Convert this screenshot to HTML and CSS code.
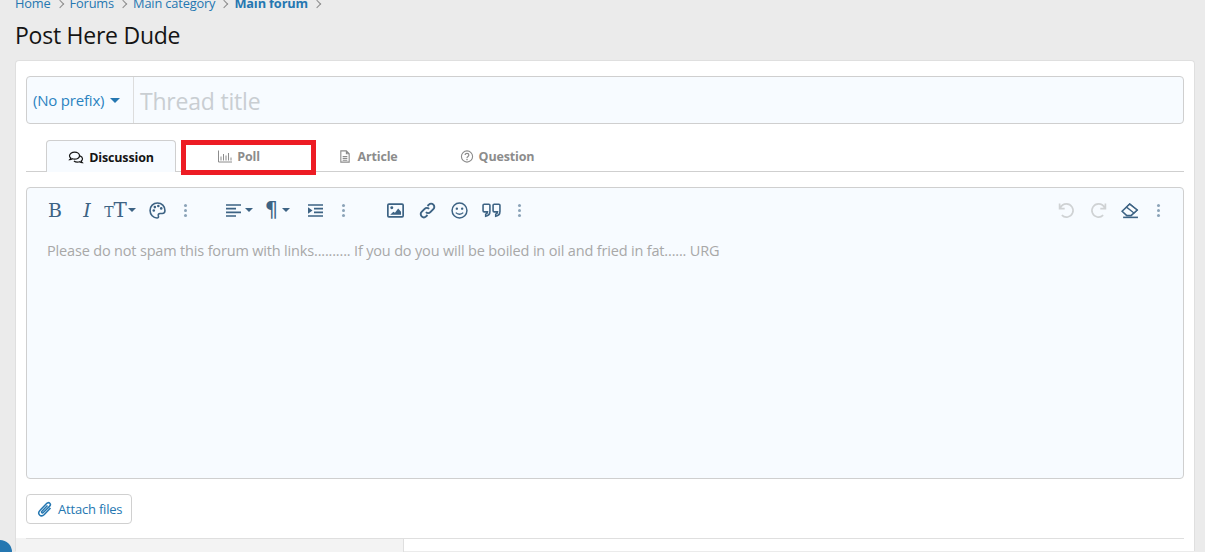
FILE: index.html
```html
<!DOCTYPE html>
<html lang="en">
<head>
    <meta charset="UTF-8">
    <meta name="viewport" content="width=device-width, initial-scale=1.0">
    <title>Post Here Dude</title>
    <link rel="stylesheet" href="styles.css">
</head>
<body>
    <ul class="crumbs">
        <li><a href="#">Home</a></li>
        <li><a href="#">Forums</a></li>
        <li><a href="#">Main category</a></li>
        <li><a href="#" class="current">Main forum</a></li>
    </ul>

    <h1>Post Here Dude</h1>

    <div class="card">
        <div class="title-row">
            <div class="prefix">(No prefix) <span class="caret caret-blue"></span></div>
            <div class="title-input">Thread title</div>
        </div>

        <div class="tabs">
            <div class="tab active">
                <svg class="tab-icon" viewBox="0 0 16 14"><g fill="none" stroke="currentColor" stroke-width="1.3"><path d="M6.500 1.200c-3 0-5.500 1.700-5.500 3.900 0 1 .5 1.800 1.300 2.500-.2.800-.7 1.400-1.100 1.800 1 0 2-.4 2.800-1 .8.300 1.600.4 2.500.4 3 0 5.300-1.700 5.300-3.800S9.500 1.200 6.500 1.200z"/><path d="M12.400 5.200c1.500.6 2.600 1.700 2.600 3.100 0 1-.5 1.800-1.300 2.500.2.800.7 1.400 1.100 1.800-1 0-2-.4-2.800-1-.8.300-1.600.4-2.500.4-1.500 0-2.800-.5-3.700-1.300"/></g></svg>
                Discussion
            </div>
            <div class="tab">
                <svg class="tab-icon" viewBox="0 0 14 12"><path d="M.5 0v11.500H14M3 6v4M5.500 3.500V10M8 5v5M10.500 2.500V10M13 7v3" fill="none" stroke="currentColor"/></svg>
                Poll
            </div>
            <div class="tab">
                <svg class="tab-icon" viewBox="0 0 11 14"><path d="M1 1h6l3 3v9H1zM7 1v3h3M3 7h5M3 9h5M3 11h5" fill="none" stroke="currentColor" stroke-width="1.200"/></svg>
                Article
            </div>
            <div class="tab">
                <svg class="tab-icon" viewBox="0 0 14 14"><circle cx="7" cy="7" r="6" fill="none" stroke="currentColor" stroke-width="1.200"/><path d="M5 5.500c0-2.500 4-2.500 4 0C9 7 7 6.800 7 8.500" fill="none" stroke="currentColor" stroke-width="1.300"/><rect x="6.300" y="9.500" width="1.400" height="1.500" fill="currentColor"/></svg>
                Question
            </div>
            <div class="poll-mark"></div>
        </div>

        <div class="editor">
            <div class="toolbar">
                <div class="tool-group">
                    <span class="tool tool-letter">B</span>
                    <span class="tool tool-letter tool-italic">I</span>
                    <span class="tool tool-size"><small>T</small>T<span class="caret"></span></span>
                    <span class="tool">
                        <svg class="icon" viewBox="0 0 16 16"><path d="M8 1C4 1 1 4 1 8c0 3.800 3 7 6.500 7 1.300 0 1.700-1 1.300-2-.4-1.100.2-2.200 1.500-2.200h2.200c1.500 0 2.500-1 2.500-2.800C15 4 12 1 8 1z" fill="none" stroke="currentColor" stroke-width="1.500"/><circle cx="4.500" cy="8" r="1.200" fill="currentColor"/><circle cx="5.500" cy="4.800" r="1.200" fill="currentColor"/><circle cx="8.800" cy="3.800" r="1.200" fill="currentColor"/><circle cx="11.500" cy="6" r="1.200" fill="currentColor"/></svg>
                    </span>
                    <span class="tool tool-dots"></span>
                </div>
                <div class="tool-group">
                    <span class="tool tool-wide">
                        <svg class="icon icon-lines" viewBox="0 0 15 14"><path d="M0 1.500h15M0 5.200h10M0 8.800h15M0 12.500h10" fill="none" stroke="currentColor" stroke-width="1.700"/></svg>
                        <span class="caret"></span>
                    </span>
                    <span class="tool tool-para">¶<span class="caret"></span></span>
                    <span class="tool">
                        <svg class="icon icon-lines" viewBox="0 0 15 14"><path d="M0 1.500h15M6 5.200h9M6 8.800h9M0 12.500h15" fill="none" stroke="currentColor" stroke-width="1.700"/><path d="M0 3.800 4.500 7 0 10.200z" fill="currentColor"/></svg>
                    </span>
                    <span class="tool tool-dots"></span>
                </div>
                <div class="tool-group">
                    <span class="tool">
                        <svg class="icon" viewBox="0 0 16 14"><rect x=".8" y="1" width="14.400" height="12" rx="1" fill="none" stroke="currentColor" stroke-width="1.600"/><circle cx="4.500" cy="4.500" r="1.400" fill="currentColor"/><path d="M3 11 6 8.200l1.500 1L10.500 5l2.700 3.200V11z" fill="currentColor"/></svg>
                    </span>
                    <span class="tool">
                        <svg class="icon" viewBox="0 0 16 16"><path d="M6.500 9.500c1.300 1.300 3 1.200 4.200 0l2.800-2.800c1.200-1.200 1.200-3 0-4.200s-3-1.200-4.200 0L8 3.800M9.500 6.500c-1.300-1.300-3-1.200-4.200 0L2.500 9.300c-1.200 1.200-1.200 3 0 4.200s3 1.200 4.200 0L8 12.200" fill="none" stroke="currentColor" stroke-width="1.800"/></svg>
                    </span>
                    <span class="tool">
                        <svg class="icon" viewBox="0 0 16 16"><circle cx="8" cy="8" r="7" fill="none" stroke="currentColor" stroke-width="1.400"/><circle cx="5.500" cy="6.300" r="1.100" fill="currentColor"/><circle cx="10.500" cy="6.300" r="1.100" fill="currentColor"/><path d="M4.500 10c1.800 2 5.200 2 7 0" fill="none" stroke="currentColor" stroke-width="1.300"/></svg>
                    </span>
                    <span class="tool">
                        <svg class="icon icon-quote" viewBox="0 0 18 14"><path d="M2 1h4.500a1 1 0 0 1 1 1v6c0 2.500-1.500 4-4 4.500v-2c1-.2 1.600-.9 1.700-2.200H2a1 1 0 0 1-1-1V2a1 1 0 0 1 1-1zM11.500 1H16a1 1 0 0 1 1 1v6c0 2.500-1.500 4-4 4.500v-2c1-.2 1.600-.9 1.700-2.200h-3.200a1 1 0 0 1-1-1V2a1 1 0 0 1 1-1z" fill="none" stroke="currentColor" stroke-width="1.500"/></svg>
                    </span>
                    <span class="tool tool-dots"></span>
                </div>
                <div class="tool-group tool-group-end">
                    <span class="tool tool-off">
                        <svg class="icon" viewBox="0 0 16 16"><path d="M1.500 1.500v4.800h4.800M2 6c1-2.600 3.200-4.200 6-4.200A6.200 6.200 0 1 1 3.600 12.400" fill="none" stroke="currentColor" stroke-width="1.600"/></svg>
                    </span>
                    <span class="tool tool-off">
                        <svg class="icon" viewBox="0 0 16 16"><path d="M14.500 1.500v4.800H9.700M14 6c-1-2.600-3.200-4.200-6-4.200a6.200 6.200 0 1 0 4.400 10.600" fill="none" stroke="currentColor" stroke-width="1.600"/></svg>
                    </span>
                    <span class="tool">
                        <svg class="icon icon-eraser" viewBox="0 0 17 15"><path d="M1 8.200 8.200 1.500l7 5.500-5.700 5.300H5.500z" fill="none" stroke="currentColor" stroke-width="1.500"/><path d="M8.200 1.500l7 5.500-3 2.800-7-5.500z" fill="#ffffff"/><path d="M8.200 1.500l7 5.500-3 2.800-7-5.500z" fill="none" stroke="currentColor" stroke-width="1.300"/><path d="M2 14h14" stroke="currentColor" stroke-width="1.500"/></svg>
                    </span>
                    <span class="tool tool-dots"></span>
                </div>
            </div>
            <div class="editor-text">Please do not spam this forum with links.......... If you do you will be boiled in oil and fried in fat...... URG</div>
        </div>

        <button class="attach">
            <svg class="attach-icon" viewBox="0 0 16 18"><path d="M13.500 8 7.300 14.500c-1.500 1.500-3.500 1.700-4.700.5s-1-3.200.5-4.700l6.500-6.800c1-1 2.300-1.200 3.200-.3s.7 2.200-.3 3.200L6.300 12.500c-.5.500-1.100.6-1.500.2s-.3-1 .2-1.500L10.500 5.500" fill="none" stroke="currentColor" stroke-width="1.500"/></svg>
            Attach files
        </button>

        <div class="options">
            <div class="options-side"></div>
            <div class="options-main"></div>
        </div>
    </div>

    <div class="corner-badge"></div>
</body>
</html>
```

FILE: styles.css
```css
html, body {
    height: 552px;
    overflow: hidden;
}
body {
    position: relative;
    margin: 0;
    padding: 0 10px 0 15px;
    font-family: "Open Sans", "Noto Sans", sans-serif;
    font-size: 13px;
    color: #141414;
    background-color: #ebebeb;
}
a {
    color: #2577b1;
    text-decoration: none;
}
.crumbs {
    display: flex;
    list-style: none;
    margin: -6px 0 0;
    padding: 0;
    height: 18px;
    line-height: 18px;
    font-size: 12.800px;
    letter-spacing: -0.15px;
}
.crumbs li {
    display: flex;
    align-items: center;
}
.crumbs li::after {
    content: "";
    width: 5px;
    height: 5px;
    margin: 2px 7px 0 6px;
    border-top: 1px solid #8c8c8c;
    border-right: 1px solid #8c8c8c;
    transform: rotate(45deg);
}
.crumbs .current {
    font-weight: 700;
}
h1 {
    margin: 5px 0 0;
    height: 36px;
    line-height: 36px;
    font-size: 23px;
    font-weight: 400;
    letter-spacing: -0.25px;
}
.card {
    box-sizing: border-box;
    height: 491px;
    margin-top: 7px;
    padding: 15px 10px 0;
    background-color: white;
    border: 1px solid #dfdfdf;
    border-bottom: none;
    border-radius: 4px 4px 0 0;
}
.title-row {
    display: flex;
    height: 48px;
    box-sizing: border-box;
    background-color: #f7fbff;
    border: 1px solid #cfcfcf;
    border-radius: 4px;
}
.prefix {
    display: flex;
    align-items: center;
    gap: 3px;
    width: 107px;
    box-sizing: border-box;
    padding-left: 6px;
    color: #2b83c1;
    font-size: 15px;
    letter-spacing: -0.2px;
    border-right: 1px solid #dddddd;
}
.title-input {
    flex: 1;
    padding-left: 6px;
    line-height: 48px;
    font-size: 23px;
    letter-spacing: -0.2px;
    color: #c9ced2;
}
.caret {
    display: inline-block;
    width: 0;
    height: 0;
    border-left: 4px solid transparent;
    border-right: 4px solid transparent;
    border-top: 4px solid currentColor;
}
.caret-blue {
    margin-left: 3px;
    border-left-width: 5px;
    border-right-width: 5px;
    border-top-width: 5px;
    color: #2577b1;
}
.tabs {
    position: relative;
    display: flex;
    height: 31px;
    margin-top: 16px;
    padding-left: 20px;
    border-bottom: 1px solid #cfcfcf;
}
.tab {
    display: flex;
    align-items: center;
    justify-content: center;
    gap: 5px;
    width: 129px;
    box-sizing: border-box;
    padding: 2px 3px 0 0;
    font-size: 12.500px;
    font-weight: 700;
    letter-spacing: -0.15px;
    color: #8c8c8c;
}
.tab.active {
    width: 130px;
    height: 32px;
    padding-right: 0;
    color: #141414;
    background-color: #f7fbff;
    border: 1px solid #cfcfcf;
    border-bottom: none;
    border-radius: 4px 4px 0 0;
}
.tab-icon {
    width: 14px;
    height: 13px;
}
.tab.active .tab-icon {
    width: 16px;
}
.poll-mark {
    position: absolute;
    left: 155px;
    top: 0;
    width: 135px;
    height: 35px;
    box-sizing: border-box;
    border: 5px solid #ed1c24;
}
.editor {
    box-sizing: border-box;
    height: 292px;
    margin-top: 15px;
    padding: 7px 13px 0 12px;
    background-color: #f7fbff;
    border: 1px solid #cfcfcf;
    border-radius: 4px;
}
.toolbar {
    display: flex;
    height: 30px;
    color: #3d6384;
}
.tool-group {
    display: flex;
    align-items: center;
    margin-right: 24px;
}
.tool-group-end {
    margin-left: auto;
    margin-right: 0;
}
.tool {
    display: flex;
    align-items: center;
    justify-content: center;
    gap: 4px;
    width: 32px;
    height: 30px;
}
.tool-letter {
    font-family: "DejaVu Serif", serif;
    font-size: 19px;
}
.tool-italic {
    font-style: italic;
}
.tool-size {
    gap: 0;
    width: 38px;
    padding-right: 4px;
    box-sizing: border-box;
    font-family: "DejaVu Serif", serif;
    font-size: 20px;
}
.tool-size small {
    margin-top: 4px;
    font-size: 14px;
}
.tool-size .caret {
    margin-left: 1px;
}
.tool-wide {
    width: 34px;
    margin-left: 1px;
}
.tool-para {
    width: 43px;
    font-family: "DejaVu Sans", sans-serif;
    font-size: 21px;
}
.tool-dots {
    width: 24px;
}
.tool-dots::before {
    content: "";
    width: 3px;
    height: 3px;
    border-radius: 50%;
    background-color: #8ba3b8;
    box-shadow: 0 -5px 0 #8ba3b8, 0 5px 0 #8ba3b8;
}
.tool-off {
    color: #cfd2d4;
}
.icon {
    width: 17px;
    height: 17px;
}
.icon-lines {
    width: 15px;
    height: 15px;
}
.icon-quote {
    width: 19px;
}
.icon-eraser {
    width: 18px;
}
.editor-text {
    margin-top: 16px;
    padding-left: 8px;
    line-height: 20px;
    font-size: 14.500px;
    letter-spacing: -0.17px;
    color: #a8a8a8;
}
.attach {
    display: flex;
    align-items: center;
    gap: 5px;
    height: 30px;
    margin-top: 15px;
    padding: 0 9px 0 10px;
    font-family: inherit;
    font-size: 13px;
    letter-spacing: -0.2px;
    color: #2577b1;
    background-color: white;
    border: 1px solid #d0d0d0;
    border-radius: 4px;
}
.attach-icon {
    width: 16px;
    height: 18px;
}
.options {
    display: flex;
    height: 15px;
    margin: 14px -10px 0;
}
.options-side {
    width: 388px;
    box-sizing: border-box;
    background: linear-gradient(#dfdfdf, #dfdfdf) 10px 0 / 100% 1px no-repeat, #f3f3f3;
    border-right: 1px solid #dfdfdf;
}
.options-main {
    flex: 1;
    margin-right: 10px;
    border-top: 1px solid #dfdfdf;
}
.corner-badge {
    position: absolute;
    left: -12px;
    top: 540px;
    width: 24px;
    height: 24px;
    border-radius: 50%;
    background-color: #2577b1;
}
```
